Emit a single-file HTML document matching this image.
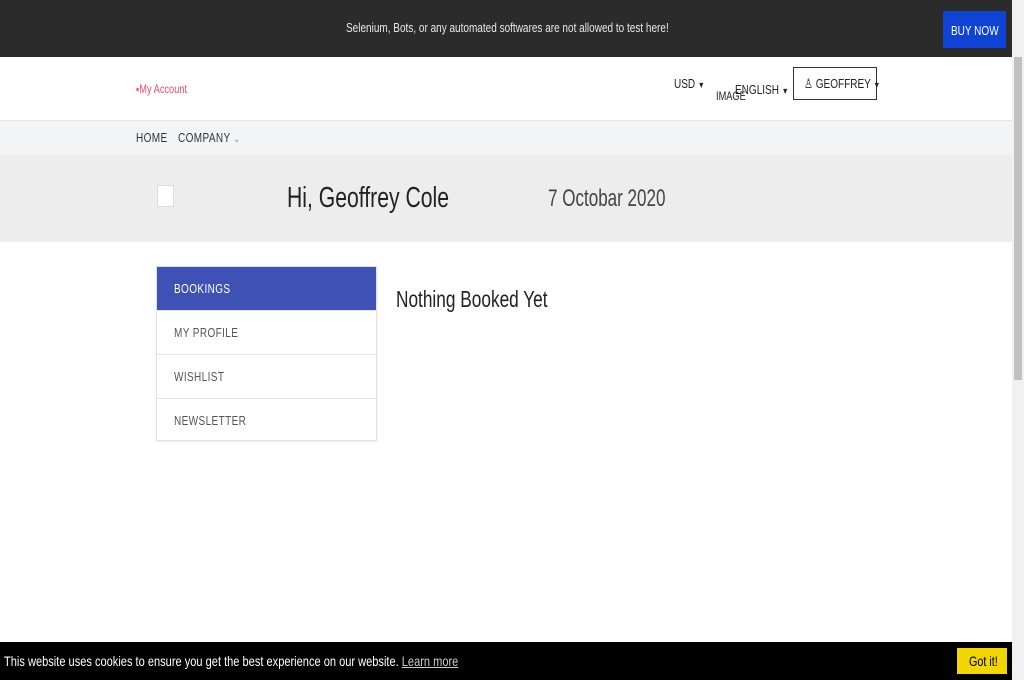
<!DOCTYPE html>
<html><head><meta charset="utf-8"><style>
*{margin:0;padding:0;box-sizing:border-box}
body{width:1024px;height:680px;overflow:hidden;background:#fff;font-family:"Liberation Sans",sans-serif;position:relative;color:#222}
.t{position:absolute;white-space:nowrap;transform:scaleX(.77);transform-origin:0 0}
.top{position:absolute;left:0;top:0;width:1012px;height:57px;background:#2b2b2b}
.buy{position:absolute;left:943px;top:11px;width:63px;height:37px;background:#0f43d6}
.hdr{position:absolute;left:0;top:57px;width:1012px;height:63px;background:#fff}
.nav{position:absolute;left:0;top:120px;width:1012px;height:35px;background:#f3f4f6;border-top:1px solid #e6e6e6}
.hero{position:absolute;left:0;top:155px;width:1012px;height:87px;background:#ededed}
.side{position:absolute;left:156px;top:266px;width:221px;height:175px;border:1px solid #e2e2e2;box-shadow:0 1px 3px rgba(0,0,0,.08)}
.side>div{position:relative;height:44px;border-bottom:1px solid #e6e6e6}
.side .t{left:17px;top:14px;font-size:13px;color:#555;letter-spacing:.5px}
.side>div.a{background:#3f51b5}
.side>div.a .t{color:#fff}
.cookie{position:absolute;left:0;top:642px;width:1012px;height:38px;background:#000;color:#fff;font-size:14px}
.sb{position:absolute;left:1012px;top:0;width:12px;height:680px;background:#f1f1f1}
.th{position:absolute;left:1014px;top:57px;width:8px;height:323px;background:#c1c1c1}
</style></head><body>
<div class="top"><span class="t" style="left:346px;top:20px;font-size:13px;color:#e8e8e8">Selenium, Bots, or any automated softwares are not allowed to test here!</span></div>
<div class="buy"><span class="t" style="left:8px;top:12px;font-size:13px;color:#fff">BUY NOW</span></div>
<div class="hdr">
 <span class="t" style="left:136px;top:25px;font-size:12px;color:#ef4b6a">▪My Account</span>
 <span class="t" style="left:674px;top:19px;font-size:13px;color:#222">USD <span style="font-size:9px">▼</span></span>
 <span class="t" style="left:716px;top:32px;font-size:12px;color:#222">IMAGE</span>
 <span class="t" style="left:735px;top:25px;font-size:13px;color:#222">ENGLISH <span style="font-size:9px">▼</span></span>
 <div style="position:absolute;left:793px;top:10px;width:84px;height:33px;border:1px solid #333"><span class="t" style="left:10px;top:8px;font-size:13px">♙ GEOFFREY <span style="font-size:9px">▼</span></span></div>
</div>
<div class="nav"><span class="t" style="left:136px;top:9px;font-size:13px;color:#333;letter-spacing:.5px">HOME</span><span class="t" style="left:178px;top:9px;font-size:13px;color:#333;letter-spacing:.5px">COMPANY <span style="font-size:10px;color:#888">⌄</span></span></div>
<div class="hero">
 <div style="position:absolute;left:157px;top:30px;width:17px;height:22px;background:#fff;border:1px solid #ddd"></div>
 <span class="t" style="left:287px;top:27px;font-size:29px;color:#222;transform:scaleX(.73)">Hi, Geoffrey Cole</span>
 <span class="t" style="left:548px;top:30px;font-size:24px;color:#444;transform:scaleX(.71)">7 Octobar 2020</span>
</div>
<div class="side"><div class="a"><span class="t">BOOKINGS</span></div><div><span class="t">MY PROFILE</span></div><div><span class="t">WISHLIST</span></div><div style="border:0"><span class="t">NEWSLETTER</span></div></div>
<span class="t" style="left:396px;top:286px;font-size:23px;color:#222;transform:scaleX(.75)">Nothing Booked Yet</span>
<div class="cookie"><span class="t" style="left:4px;top:11px;transform:scaleX(.79)">This website uses cookies to ensure you get the best experience on our website. <u style="color:#ccc">Learn more</u></span>
<div style="position:absolute;left:957px;top:6px;width:50px;height:26px;background:#f1d600"><span class="t" style="left:12px;top:5px;font-size:14px;color:#000">Got it!</span></div></div>
<div class="sb"></div><div class="th"></div>
</body></html>
